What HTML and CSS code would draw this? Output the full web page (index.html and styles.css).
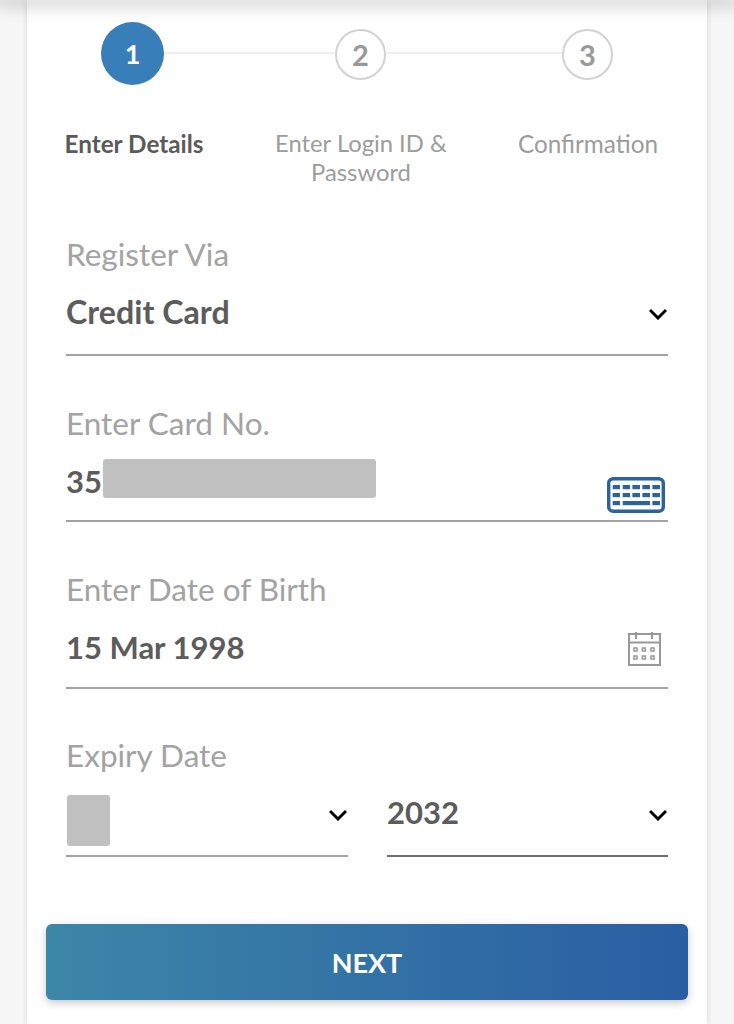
FILE: index.html
```html
<!DOCTYPE html>
<html lang="en">
<head>
<meta charset="utf-8">
<title>Register</title>
<link rel="stylesheet" href="styles.css">
</head>
<body>
<div class="top-edge"></div>
<main class="card">
  <div class="stepper">
    <span class="circle circle-active">1</span>
    <span class="connector"></span>
    <span class="circle">2</span>
    <span class="connector connector-long"></span>
    <span class="circle">3</span>
  </div>
  <div class="step-labels">
    <span class="step-label step-label-active">Enter Details</span>
    <span class="step-label step-label-tight">Enter Login ID &amp; Password</span>
    <span class="step-label">Confirmation</span>
  </div>
  <form class="fields">
    <div class="field">
      <div class="field-label">Register Via</div>
      <div class="field-control">
        <span class="value value-large">Credit Card</span>
        <svg class="chevron" viewBox="0 0 18 12"><path d="M1 2l8 8 8-8"/></svg>
      </div>
    </div>
    <div class="field field-icon">
      <div class="field-label">Enter Card No.</div>
      <div class="field-control">
        <span class="value">35</span>
        <span class="mask mask-card"></span>
        <svg class="keyboard" viewBox="0 0 58 36">
          <rect class="keyboard-frame" x="1.7" y="1.7" width="54.6" height="32.6" rx="4.5"/>
          <g class="keyboard-keys">
            <rect x="5.7" y="8" width="7.3" height="4.2"/><rect x="15.7" y="8" width="7.3" height="4.2"/><rect x="25.4" y="8" width="7.6" height="4.2"/><rect x="35.4" y="8" width="7.6" height="4.2"/><rect x="45.4" y="8" width="7.6" height="4.2"/>
            <rect x="5.7" y="16" width="7.3" height="4.2"/><rect x="15.7" y="16" width="7.3" height="4.2"/><rect x="25.4" y="16" width="7.6" height="4.2"/><rect x="35.4" y="16" width="7.6" height="4.2"/><rect x="45.4" y="16" width="7.6" height="4.2"/>
            <rect x="5.7" y="24" width="7.3" height="4.2"/><rect x="15.7" y="24" width="27.3" height="4.2"/><rect x="45.4" y="24" width="7.6" height="4.2"/>
          </g>
        </svg>
      </div>
    </div>
    <div class="field field-icon field-dob">
      <div class="field-label">Enter Date of Birth</div>
      <div class="field-control">
        <span class="value">15 Mar 1998</span>
        <svg class="calendar" viewBox="0 0 34 34">
          <rect x="1" y="2" width="31" height="31"/>
          <path d="M1 10.5h31M8 0v7M24 0v7"/>
          <g class="calendar-days">
            <rect x="6" y="16" width="3" height="3"/><rect x="14.4" y="16" width="3" height="3"/><rect x="23" y="16" width="3" height="3"/>
            <rect x="6" y="24" width="3" height="3"/><rect x="14.4" y="24" width="3" height="3"/><rect x="23" y="24" width="3" height="3"/>
          </g>
        </svg>
      </div>
    </div>
    <div class="field">
      <div class="field-label">Expiry Date</div>
      <div class="field-pair">
        <div class="field-control">
          <span class="value">&nbsp;</span>
          <span class="mask mask-month"></span>
          <svg class="chevron" viewBox="0 0 18 12"><path d="M1 2l8 8 8-8"/></svg>
        </div>
        <div class="field-control field-control-dark">
          <span class="value value-raised">2032</span>
          <svg class="chevron" viewBox="0 0 18 12"><path d="M1 2l8 8 8-8"/></svg>
        </div>
      </div>
    </div>
  </form>
  <button class="next" type="button">NEXT</button>
</main>
</body>
</html>
```
FILE: styles.css
```css
* { box-sizing: border-box; }
html, body { margin: 0; height: 1024px; overflow: hidden; }
body {
  background: #f7f7f7;
  font-family: "Lato", "Liberation Sans", sans-serif;
  color: #555;
}
.top-edge {
  position: relative;
  z-index: 2;
  height: 0;
  box-shadow: 0 0 18px 5px rgba(0, 0, 0, .24);
}
.card {
  width: 680px;
  height: 1024px;
  margin-left: 27px;
  padding-top: 21px;
  background: #fff;
  box-shadow: 0 0 6px rgba(0, 0, 0, .14);
}
.stepper {
  display: flex;
  align-items: center;
  height: 64px;
  padding: 0 94px 0 74px;
}
.circle {
  display: flex;
  align-items: center;
  justify-content: center;
  flex: none;
  width: 51px;
  height: 51px;
  margin-top: 2px;
  border: 2px solid #d2d2d2;
  border-radius: 50%;
  color: #999;
  font-family: "Lato", sans-serif;
  font-size: 29px;
  font-weight: 700;
}
.circle-active {
  width: 63px;
  height: 63px;
  margin-top: 0;
  border: 0;
  background: #387fb9;
  color: #fff;
  font-size: 27px;
}
.connector {
  flex: 171;
  height: 2px;
  background: #efefef;
}
.connector-long { flex: 176; }
.step-labels {
  display: flex;
  justify-content: space-between;
  margin-top: 44px;
  padding: 0 31px 0 19px;
}
.step-label {
  width: 176px;
  height: 58px;
  color: #9c9c9c;
  font-size: 24.3px;
  line-height: 29px;
  text-align: center;
}
.step-label-tight { font-size: 23.8px; }
.step-label-active {
  color: #5a5a5a;
  font-weight: 700;
}
.fields {
  display: flex;
  flex-direction: column;
  gap: 49px;
  margin-top: 49px;
  padding: 0 39px;
}
.field-label {
  height: 36px;
  margin-bottom: 22px;
  color: #a3a3a3;
  font-size: 31.5px;
  line-height: 36px;
}
.field-control {
  position: relative;
  display: flex;
  align-items: flex-start;
  justify-content: space-between;
  height: 62px;
  border-bottom: 2px solid #a3a3a3;
}
.field-icon .field-control { height: 59px; }
.field-dob .field-control { height: 60px; margin-bottom: -1px; }
.field-pair {
  display: grid;
  grid-template-columns: 282px 281px;
  gap: 39px;
}
.field-control-dark { border-bottom-color: #6f6f6f; }
.value {
  color: #5c5c5c;
  font-size: 31px;
  font-weight: 700;
  line-height: 36px;
}
.value-large { font-size: 32.2px; }
.value-raised { margin-top: -1px; }
.chevron {
  flex: none;
  width: 18px;
  height: 12px;
  margin: 14px 1px 0 0;
  fill: none;
  stroke: #000;
  stroke-width: 3;
}
.mask {
  position: absolute;
  border-radius: 3px;
  background: #c0c0c0;
}
.mask-card { left: 37px; top: -4px; width: 273px; height: 39px; }
.mask-month { left: 1px; top: 0; width: 43px; height: 51px; }
.keyboard {
  flex: none;
  width: 58px;
  height: 36px;
  margin: 14px 3px 0 0;
}
.keyboard-frame { fill: none; stroke: #2b639f; stroke-width: 3.4; }
.keyboard-keys { fill: #2b639f; }
.calendar {
  flex: none;
  width: 34px;
  height: 34px;
  margin: 3px 6px 0 0;
  fill: none;
  stroke: #999;
  stroke-width: 2;
}
.calendar-days { stroke-width: 1.5; }
.next {
  display: block;
  width: 642px;
  height: 76px;
  margin: 67px 0 0 19px;
  border: 0;
  border-radius: 6px;
  background: linear-gradient(90deg, #3c86a8, #2a5ea3);
  box-shadow: 0 3px 8px rgba(0, 0, 0, .22);
  color: #fff;
  font-family: inherit;
  font-size: 27px;
  font-weight: 700;
}
```
